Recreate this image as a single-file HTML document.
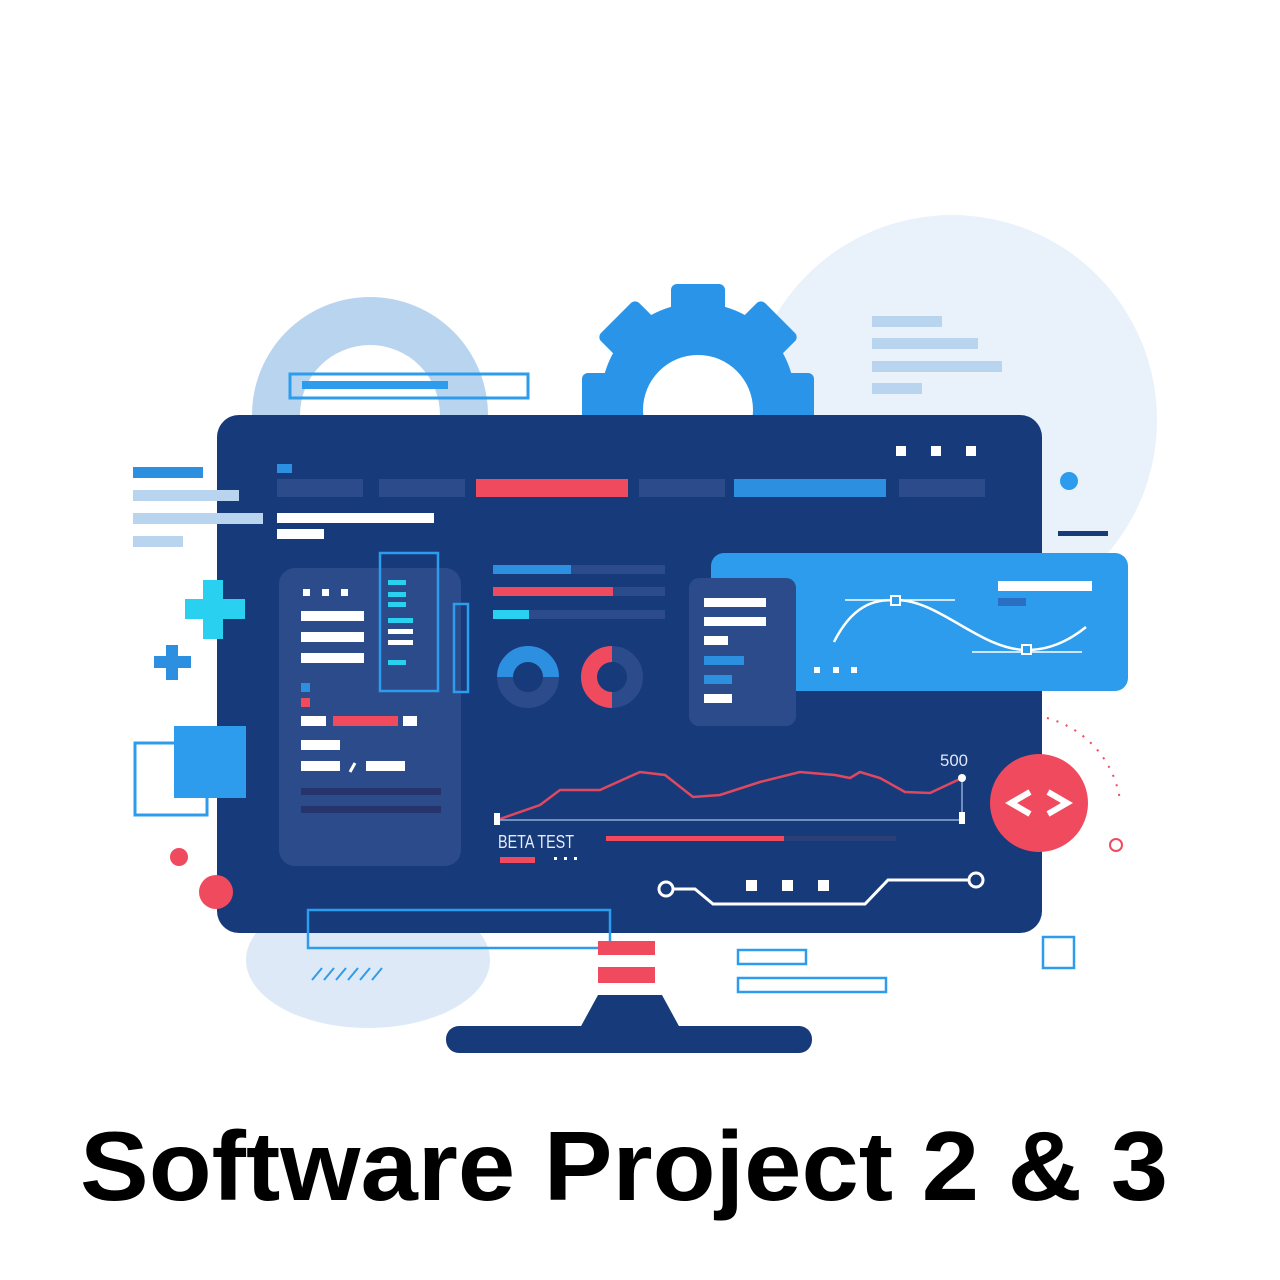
<!DOCTYPE html>
<html><head><meta charset="utf-8"><style>html,body{margin:0;padding:0;background:#fff}svg{display:block}</style></head>
<body>
<svg width="1280" height="1280" viewBox="0 0 1280 1280" xmlns="http://www.w3.org/2000/svg">
<rect width="1280" height="1280" fill="#fff"/>
<circle cx="952" cy="420" r="205" fill="#e9f1fb"/>
<path d="M252 415 A118 118 0 0 1 488 415 L440 415 A70 70 0 0 0 300 415 Z" fill="#b9d4ef"/>
<ellipse cx="368" cy="960" rx="122" ry="68" fill="#dde9f7"/>
<rect x="290" y="374" width="238" height="24" fill="none" stroke="#2d9cec" stroke-width="3"/>
<rect x="302" y="381" width="146" height="8" fill="#2d9cec"/>
<rect x="872" y="316" width="70" height="11" fill="#b9d4ef"/>
<rect x="872" y="338" width="106" height="11" fill="#b9d4ef"/>
<rect x="872" y="361" width="130" height="11" fill="#b9d4ef"/>
<rect x="872" y="383" width="50" height="11" fill="#b9d4ef"/>
<g fill="#2a95e8">
<circle cx="698" cy="400" r="97"/>
<rect x="671" y="284" width="54" height="40" rx="6"/>
<rect x="671" y="284" width="54" height="40" rx="6" transform="rotate(45 698 400)"/>
<rect x="671" y="284" width="54" height="40" rx="6" transform="rotate(-45 698 400)"/>
<rect x="671" y="284" width="54" height="40" rx="6" transform="rotate(90 698 400)"/>
<rect x="671" y="284" width="54" height="40" rx="6" transform="rotate(-90 698 400)"/>
</g>
<circle cx="698" cy="410" r="55" fill="#fff"/>
<rect x="135" y="743" width="72" height="72" fill="none" stroke="#2d9cec" stroke-width="3"/>
<circle cx="179" cy="857" r="9" fill="#f04a5e"/>
<!-- monitor -->
<rect x="217" y="415" width="825" height="518" rx="22" fill="#173a7a"/>
<!-- overlays on monitor -->
<rect x="133" y="467" width="70" height="11" fill="#2d8fe0"/>
<rect x="133" y="490" width="106" height="11" fill="#b9d4ef"/>
<rect x="133" y="513" width="130" height="11" fill="#b9d4ef"/>
<rect x="133" y="536" width="50" height="11" fill="#b9d4ef"/>
<path d="M203 580h20v19h22v20h-22v20h-20v-20h-18v-20h18z" fill="#2ad0f0"/>
<path d="M166 645h12v11h13v12h-13v12h-12v-12h-12v-12h12z" fill="#2d8fe0"/>
<rect x="174" y="726" width="72" height="72" fill="#2d9cec"/>
<circle cx="216" cy="892" r="17" fill="#f04a5e"/>
<g fill="#fff"><rect x="896" y="446" width="10" height="10"/><rect x="931" y="446" width="10" height="10"/><rect x="966" y="446" width="10" height="10"/></g>
<rect x="277" y="464" width="15" height="9" fill="#2d8fe0"/>
<rect x="277" y="479" width="86" height="18" fill="#2b4b8b"/>
<rect x="379" y="479" width="86" height="18" fill="#2b4b8b"/>
<rect x="476" y="479" width="152" height="18" fill="#f04a5e"/>
<rect x="639" y="479" width="86" height="18" fill="#2b4b8b"/>
<rect x="734" y="479" width="152" height="18" fill="#2d8fe0"/>
<rect x="899" y="479" width="86" height="18" fill="#2b4b8b"/>
<rect x="277" y="513" width="157" height="10" fill="#fff"/>
<rect x="277" y="529" width="47" height="10" fill="#fff"/>
<rect x="279" y="568" width="182" height="298" rx="16" fill="#2b4b8b"/>
<g fill="#fff"><rect x="303" y="589" width="7" height="7"/><rect x="322" y="589" width="7" height="7"/><rect x="341" y="589" width="7" height="7"/>
<rect x="301" y="611" width="63" height="10"/><rect x="301" y="632" width="63" height="10"/><rect x="301" y="653" width="63" height="10"/>
<rect x="301" y="716" width="25" height="10"/><rect x="403" y="716" width="14" height="10"/><rect x="301" y="740" width="39" height="10"/>
<rect x="301" y="761" width="39" height="10"/><rect x="366" y="761" width="39" height="10"/></g>
<path d="M350 772l5-9" stroke="#fff" stroke-width="3"/>
<rect x="301" y="683" width="9" height="9" fill="#2d8fe0"/><rect x="301" y="698" width="9" height="9" fill="#f04a5e"/>
<rect x="333" y="716" width="65" height="10" fill="#f04a5e"/>
<rect x="301" y="788" width="140" height="7" fill="#26346b"/><rect x="301" y="806" width="140" height="7" fill="#26346b"/>
<rect x="380" y="553" width="58" height="138" fill="none" stroke="#2d9cec" stroke-width="2.5"/>
<rect x="454" y="604" width="14" height="88" fill="none" stroke="#2d9cec" stroke-width="2.5"/>
<g fill="#2ad0f0"><rect x="388" y="580" width="18" height="5"/><rect x="388" y="592" width="18" height="5"/><rect x="388" y="602" width="18" height="5"/><rect x="388" y="618" width="25" height="5"/><rect x="388" y="660" width="18" height="5"/></g>
<rect x="388" y="629" width="25" height="5" fill="#fff"/><rect x="388" y="640" width="25" height="5" fill="#fff"/>
<rect x="493" y="565" width="172" height="9" fill="#2b4b8b"/><rect x="493" y="565" width="78" height="9" fill="#2d8fe0"/>
<rect x="493" y="587" width="172" height="9" fill="#2b4b8b"/><rect x="493" y="587" width="120" height="9" fill="#f04a5e"/>
<rect x="493" y="610" width="172" height="9" fill="#2b4b8b"/><rect x="493" y="610" width="36" height="9" fill="#2ad0f0"/>
<circle cx="528" cy="677" r="23" fill="none" stroke="#2b4b8b" stroke-width="16"/>
<path d="M505 677 A23 23 0 0 1 551 677" fill="none" stroke="#2d8fe0" stroke-width="16"/>
<circle cx="612" cy="677" r="23" fill="none" stroke="#2b4b8b" stroke-width="16"/>
<path d="M612 654 A23 23 0 0 0 612 700" fill="none" stroke="#f04a5e" stroke-width="16"/>
<rect x="711" y="553" width="417" height="138" rx="13" fill="#2d9cec"/>
<rect x="689" y="578" width="107" height="148" rx="10" fill="#2b4b8b"/>
<g fill="#fff"><rect x="704" y="598" width="62" height="9"/><rect x="704" y="617" width="62" height="9"/><rect x="704" y="636" width="24" height="9"/><rect x="704" y="694" width="28" height="9"/></g>
<rect x="704" y="656" width="40" height="9" fill="#2d8fe0"/><rect x="704" y="675" width="28" height="9" fill="#2d8fe0"/>
<path d="M834 642 C855 600 880 600 896 600 C940 600 980 650 1027 650 C1050 650 1070 640 1086 627" fill="none" stroke="#fff" stroke-width="2.5"/>
<path d="M845 600h110M972 652h110" stroke="#fff" stroke-width="1.5"/>
<rect x="891" y="596" width="9" height="9" fill="#2d9cec" stroke="#fff" stroke-width="2"/>
<rect x="1022" y="645" width="9" height="9" fill="#2d9cec" stroke="#fff" stroke-width="2"/>
<rect x="998" y="581" width="94" height="10" fill="#fff"/><rect x="998" y="598" width="28" height="8" fill="#2b6fc4"/>
<g fill="#fff"><rect x="814" y="667" width="6" height="6"/><rect x="833" y="667" width="6" height="6"/><rect x="851" y="667" width="6" height="6"/></g>
<path d="M497 820 L540 805 L560 790 L600 790 L640 772 L665 775 L693 797 L720 795 L760 782 L800 772 L835 775 L850 778 L860 772 L880 778 L905 792 L930 793 L962 778" fill="none" stroke="#e04860" stroke-width="2.5"/>
<path d="M497 820 H962 V778" fill="none" stroke="#8fa9d8" stroke-width="1.5"/>
<circle cx="962" cy="778" r="4" fill="#fff"/><rect x="959" y="812" width="6" height="12" fill="#fff"/><rect x="494" y="813" width="6" height="12" fill="#fff"/>
<text x="940" y="766" font-family="Liberation Sans, sans-serif" font-size="17" fill="#dfe6f5" textLength="28" lengthAdjust="spacingAndGlyphs">500</text>
<text x="498" y="848" font-family="Liberation Sans, sans-serif" font-size="18" fill="#e6ecf8" textLength="76" lengthAdjust="spacingAndGlyphs">BETA TEST</text>
<rect x="500" y="857" width="35" height="6" fill="#f04a5e"/>
<g fill="#fff"><rect x="554" y="857" width="3" height="3"/><rect x="564" y="857" width="3" height="3"/><rect x="574" y="857" width="3" height="3"/></g>
<rect x="606" y="836" width="290" height="5" fill="#2b3f78"/><rect x="606" y="836" width="178" height="5" fill="#f04a5e"/>
<path d="M660 889 H695 L713 904 H865 L888 880 H970" fill="none" stroke="#fff" stroke-width="3"/>
<circle cx="666" cy="889" r="7" fill="#173a7a" stroke="#fff" stroke-width="3"/>
<circle cx="976" cy="880" r="7" fill="#173a7a" stroke="#fff" stroke-width="3"/>
<g fill="#fff"><rect x="746" y="880" width="11" height="11"/><rect x="782" y="880" width="11" height="11"/><rect x="818" y="880" width="11" height="11"/></g>
<circle cx="1039" cy="803" r="49" fill="#f04a5e"/>
<path d="M1030 792 L1011 803 L1030 814 M1048 792 L1067 803 L1048 814" fill="none" stroke="#fff" stroke-width="6"/>
<path d="M1047 718 A100 100 0 0 1 1120 800" fill="none" stroke="#f04a5e" stroke-width="2" stroke-dasharray="2 8"/>
<circle cx="1116" cy="845" r="6" fill="none" stroke="#f04a5e" stroke-width="2"/>
<circle cx="1069" cy="481" r="9" fill="#2d9cec"/>
<rect x="1058" y="531" width="50" height="5" fill="#173a7a"/>
<rect x="308" y="910" width="302" height="38" fill="none" stroke="#2d9cec" stroke-width="2.5"/>
<path d="M312 980l10-12M324 980l10-12M336 980l10-12M348 980l10-12M360 980l10-12M372 980l10-12" stroke="#2d9cec" stroke-width="2"/>
<rect x="738" y="950" width="68" height="14" fill="none" stroke="#2d9cec" stroke-width="2.5"/>
<rect x="738" y="978" width="148" height="14" fill="none" stroke="#2d9cec" stroke-width="2.5"/>
<rect x="1043" y="937" width="31" height="31" fill="none" stroke="#2d9cec" stroke-width="2.5"/>
<rect x="598" y="941" width="57" height="14" fill="#f04a5e"/>
<rect x="598" y="967" width="57" height="16" fill="#f04a5e"/>
<path d="M598 995 H662 L680 1028 H580 Z" fill="#173a7a"/>
<rect x="446" y="1026" width="366" height="27" rx="13" fill="#173a7a"/>
<text x="80" y="1200" font-family="Liberation Sans, sans-serif" font-weight="bold" font-size="98" fill="#000" textLength="1088" lengthAdjust="spacingAndGlyphs">Software Project 2 &amp; 3</text>
</svg>
</body></html>
